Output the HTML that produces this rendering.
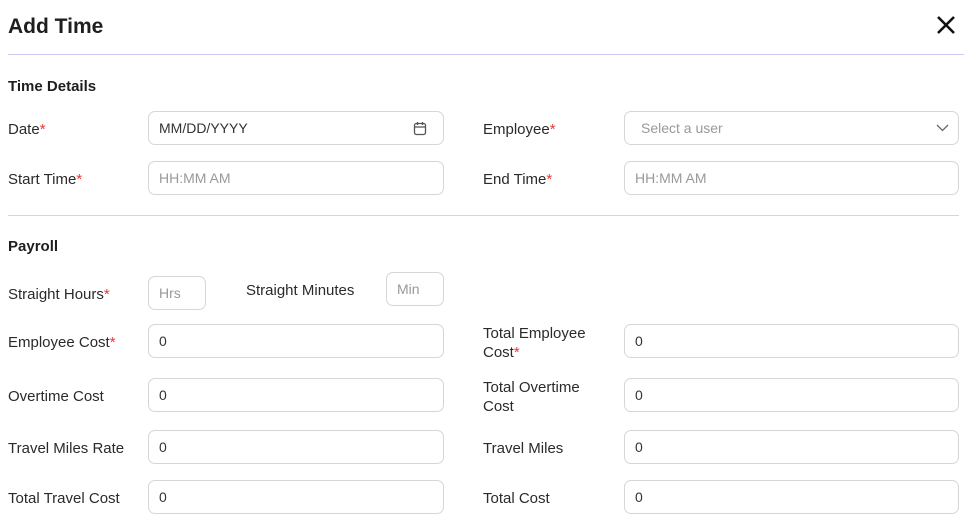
<!DOCTYPE html>
<html><head><style>
body{margin:0;width:970px;height:524px;background:#fff;font-family:"Liberation Sans",sans-serif;color:#222;position:relative;overflow:hidden}
.a{position:absolute;white-space:nowrap}
.t{font-size:15px;color:#2a2a2a;margin-top:1px}
.r{color:#e53935}
.b{position:absolute;border:1px solid #d6d6d6;border-radius:7px;box-sizing:border-box;height:34px;font-size:14px;padding-left:10px;line-height:33px;color:#333}
.p{color:#999}
</style></head><body>
<div class="a" style="left:8px;top:15px;font-size:21px;font-weight:bold;color:#1e1e1e">Add Time</div>
<svg class="a" style="left:935px;top:14px" width="22" height="22" viewBox="0 0 22 22"><path d="M3 3L19 19M19 3L3 19" stroke="#111" stroke-width="2.6"/></svg>
<div class="a" style="left:8px;top:54px;width:956px;height:1px;background:#cdc8ef"></div>
<div class="a" style="left:8px;top:78px;font-size:15px;font-weight:bold;color:#1e1e1e">Time Details</div>

<div class="a t" style="left:8px;top:120px">Date<span class="r">*</span></div>
<div class="b" style="left:148px;top:111px;width:296px">MM/DD/YYYY
<svg style="position:absolute;right:16px;top:9px" width="14" height="15" viewBox="0 0 14 15"><rect x="1.5" y="2.5" width="11" height="11" rx="2" fill="none" stroke="#555" stroke-width="1.3"/><path d="M1.5 6h11M4.5 1v3M9.5 1v3" stroke="#555" stroke-width="1.3"/></svg></div>
<div class="a t" style="left:483px;top:120px">Employee<span class="r">*</span></div>
<div class="b p" style="left:624px;top:111px;width:335px;padding-left:16px">Select a user
<svg style="position:absolute;right:9px;top:12px" width="13" height="8" viewBox="0 0 13 8"><path d="M1 1l5.5 5.5L12 1" fill="none" stroke="#666" stroke-width="1.3"/></svg></div>

<div class="a t" style="left:8px;top:170px">Start Time<span class="r">*</span></div>
<div class="b p" style="left:148px;top:161px;width:296px">HH:MM AM</div>
<div class="a t" style="left:483px;top:170px">End Time<span class="r">*</span></div>
<div class="b p" style="left:624px;top:161px;width:335px">HH:MM AM</div>

<div class="a" style="left:8px;top:215px;width:951px;height:1px;background:#d6d6d6"></div>
<div class="a" style="left:8px;top:238px;font-size:15px;font-weight:bold;color:#1e1e1e">Payroll</div>

<div class="a t" style="left:8px;top:285px">Straight Hours<span class="r">*</span></div>
<div class="b p" style="left:148px;top:276px;width:58px">Hrs</div>
<div class="a t" style="left:246px;top:281px">Straight Minutes</div>
<div class="b p" style="left:386px;top:272px;width:58px">Min</div>

<div class="a t" style="left:8px;top:333px">Employee Cost<span class="r">*</span></div>
<div class="b" style="left:148px;top:324px;width:296px">0</div>
<div class="a t" style="left:483px;top:323px;line-height:19px">Total Employee<br>Cost<span class="r">*</span></div>
<div class="b" style="left:624px;top:324px;width:335px">0</div>

<div class="a t" style="left:8px;top:387px">Overtime Cost</div>
<div class="b" style="left:148px;top:378px;width:296px">0</div>
<div class="a t" style="left:483px;top:377px;line-height:19px">Total Overtime<br>Cost</div>
<div class="b" style="left:624px;top:378px;width:335px">0</div>

<div class="a t" style="left:8px;top:439px">Travel Miles Rate</div>
<div class="b" style="left:148px;top:430px;width:296px">0</div>
<div class="a t" style="left:483px;top:439px">Travel Miles</div>
<div class="b" style="left:624px;top:430px;width:335px">0</div>

<div class="a t" style="left:8px;top:489px">Total Travel Cost</div>
<div class="b" style="left:148px;top:480px;width:296px">0</div>
<div class="a t" style="left:483px;top:489px">Total Cost</div>
<div class="b" style="left:624px;top:480px;width:335px">0</div>
</body></html>
